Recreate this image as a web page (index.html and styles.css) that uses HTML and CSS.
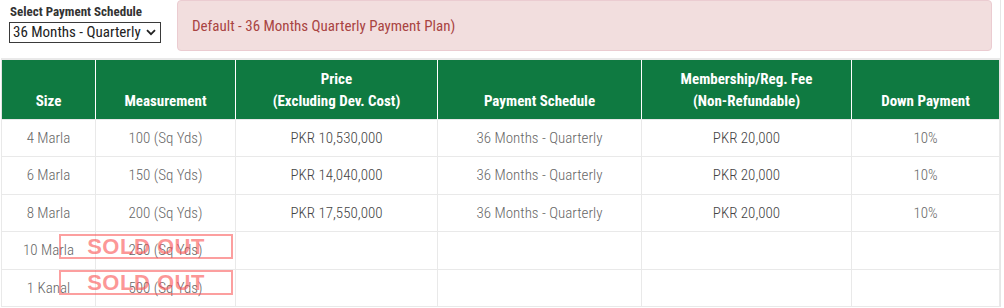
FILE: index.html
```html
<!DOCTYPE html>
<html>
<head>
<meta charset="utf-8">
<link rel="stylesheet" href="styles.css">
</head>
<body>
<div class="page">
  <div class="top">
    <div class="picker">
      <label class="picker-label" for="sched">Select Payment Schedule</label>
      <div class="select">
        <span class="select-text">36 Months - Quarterly</span>
        <svg class="chev" width="10" height="7" viewBox="0 0 10 7"><path d="M1 1.2 L5 5.2 L9 1.2" fill="none" stroke="#222" stroke-width="1.8"/></svg>
      </div>
    </div>
    <div class="alert">Default - 36 Months Quarterly Payment Plan)</div>
  </div>
  <table class="plans">
    <colgroup>
      <col class="c1"><col class="c2"><col class="c3"><col class="c4"><col class="c5"><col class="c6">
    </colgroup>
    <thead>
      <tr>
        <th>Size</th>
        <th>Measurement</th>
        <th>Price<br>(Excluding Dev. Cost)</th>
        <th>Payment Schedule</th>
        <th>Membership/Reg. Fee<br>(Non-Refundable)</th>
        <th>Down Payment</th>
      </tr>
    </thead>
    <tbody>
      <tr><td>4 Marla</td><td>100 (Sq Yds)</td><td>PKR 10,530,000</td><td>36 Months - Quarterly</td><td>PKR 20,000</td><td>10%</td></tr>
      <tr><td>6 Marla</td><td>150 (Sq Yds)</td><td>PKR 14,040,000</td><td>36 Months - Quarterly</td><td>PKR 20,000</td><td>10%</td></tr>
      <tr><td>8 Marla</td><td>200 (Sq Yds)</td><td>PKR 17,550,000</td><td>36 Months - Quarterly</td><td>PKR 20,000</td><td>10%</td></tr>
      <tr class="r4"><td class="sold">10 Marla<span class="stamp">SOLD OUT</span></td><td>250 (Sq Yds)</td><td></td><td></td><td></td><td></td></tr>
      <tr class="r5"><td class="sold">1 Kanal<span class="stamp">SOLD OUT</span></td><td>500 (Sq Yds)</td><td></td><td></td><td></td><td></td></tr>
    </tbody>
  </table>
</div>
</body>
</html>
```
FILE: styles.css
```css
html, body {
  margin: 0;
  padding: 0;
  background: #fff;
}
body {
  font-family: Roboto, "Liberation Sans", sans-serif;
  font-stretch: 75%;
  width: 1004px;
  height: 308px;
  overflow: hidden;
}
.page {
  width: 1000px;
  border-right: 1px solid #e6e6e6;
}
.top {
  display: flex;
  align-items: flex-start;
  height: 58px;
}
.picker {
  padding: 4px 0 0 9px;
  width: 168px;
  flex: none;
}
.picker-label {
  display: block;
  font-weight: 700;
  font-size: 13px;
  line-height: 15px;
  color: #333;
  padding-left: 1px;
  margin-bottom: 3px;
}
.select {
  box-sizing: border-box;
  width: 152px;
  height: 21px;
  border: 1px solid #3a3a3a;
  display: flex;
  align-items: center;
  justify-content: space-between;
  padding: 0 4px 0 3px;
  font-size: 15px;
  color: #222;
  white-space: nowrap;
}
.select-text {
  line-height: 19px;
}
.chev {
  display: block;
}
.alert {
  box-sizing: border-box;
  width: 815px;
  height: 51px;
  background: #f2dede;
  border: 1px solid #ebccd1;
  border-radius: 4px;
  color: #a94442;
  font-size: 15px;
  line-height: 20px;
  padding: 15px 14px;
}
.plans {
  margin-left: 1px;
  width: 999px;
  border-collapse: collapse;
  border: 1px solid #e3e3e3;
  border-top: 2px solid #e9e9e9;
  table-layout: fixed;
}
.c1 { width: 94px; }
.c2 { width: 140px; }
.c3 { width: 202px; }
.c4 { width: 204px; }
.c5 { width: 210px; }
.c6 { width: 148px; }
.plans th {
  background: #0f7a41;
  color: #fff;
  font-weight: 700;
  font-size: 15px;
  line-height: 22px;
  padding: 8px 4px 7px;
  vertical-align: bottom;
  text-align: center;
  border-left: 1px solid #fff;
  border-bottom: 1px solid #e9e9e9;
}
.plans th:first-child {
  border-left: none;
}
.plans td {
  font-size: 15px;
  font-weight: 300;
  line-height: 20.4px;
  padding: 8px 4px;
  color: #666;
  text-align: center;
  border: 1px solid #e9e9e9;
}
.plans td:nth-child(3),
.plans td:nth-child(5) {
  color: #444;
}
.sold {
  position: relative;
}
.stamp {
  position: absolute;
  left: 57px;
  top: 2px;
  box-sizing: border-box;
  width: 174px;
  height: 25px;
  border: 2px solid rgba(250, 80, 80, 0.55);
  color: rgba(250, 80, 80, 0.6);
  font-family: "Liberation Sans", Arial, sans-serif;
  font-stretch: normal;
  font-weight: 700;
  font-size: 22px;
  line-height: 21px;
  text-align: center;
  letter-spacing: 0.5px;
}
.r5 .stamp {
  top: 0;
}
```
